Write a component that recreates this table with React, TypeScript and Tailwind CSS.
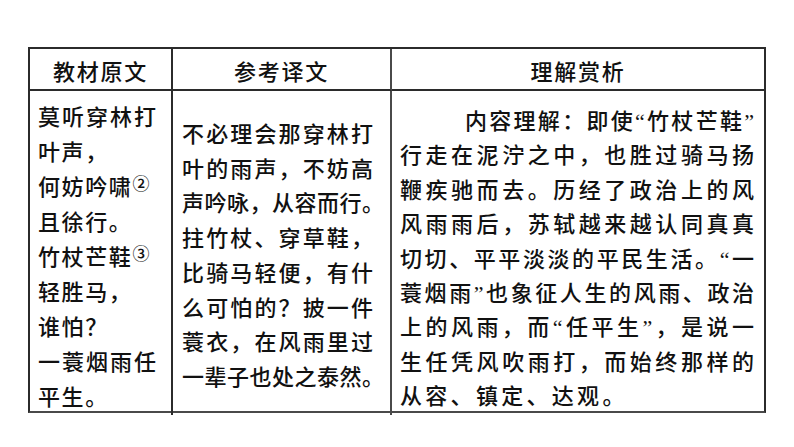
import React from 'react';

const font = { fontFamily: '"Liberation Serif", "Noto Sans CJK SC", sans-serif' };

// a line that is stretched edge to edge, like the justified print
const Full: React.FC<{ children: React.ReactNode; className?: string }> = ({ children, className = '' }) => (
  <div className={`whitespace-nowrap text-justify [text-align-last:justify] ${className}`}>{children}</div>
);

const Line: React.FC<{ children: React.ReactNode; className?: string }> = ({ children, className = '' }) => (
  <div className={`whitespace-nowrap ${className}`}>{children}</div>
);

const Note: React.FC<{ n: string }> = ({ n }) => (
  <span className="relative -top-[5px] text-[17px] leading-none">{n}</span>
);

const Dot = () => <span className="inline-block w-[11px]">。</span>;

const App: React.FC = () => {
  return (
    <div className="w-[794px] h-[447px] bg-white text-[#111] font-medium pt-[47px] pl-[28px]" style={font}>
      <div className="w-[738px] h-[366px] border-2 border-[#2b2b2b] border-b-[#4a4a4a] grid grid-cols-[143px_219px_1fr] grid-rows-[42px_1fr] text-[22px]">
        {/* header */}
        <div className="border-r-2 border-b-2 border-[#2b2b2b] flex items-center justify-center pt-[6px] tracking-[1.7px]">
          教材原文
        </div>
        <div className="border-r-2 border-b-2 border-[#2b2b2b] border-r-[#4a4a4a] flex items-center justify-center pt-[6px] tracking-[1.7px]">
          参考译文
        </div>
        <div className="border-b-2 border-[#2b2b2b] flex items-center justify-center pt-[6px] tracking-[1.7px]">
          理解赏析
        </div>

        {/* original text */}
        <div className="border-r-2 border-[#2b2b2b] pl-[8px] pr-[15px] pt-[9px] leading-[35px] tracking-[1.6px]">
          <Full className="tracking-normal">莫听穿林打</Full>
          <Line>叶声，</Line>
          <Line>何妨吟啸<Note n="②" /></Line>
          <Line>且徐行。</Line>
          <Line>竹杖芒鞋<Note n="③" /></Line>
          <Line>轻胜马，</Line>
          <Line>谁怕？</Line>
          <Full className="tracking-normal">一蓑烟雨任</Full>
          <Line>平生。</Line>
        </div>

        {/* translation */}
        <div className="border-r-2 border-[#4a4a4a] pl-[9px] pr-[17px] pt-[27px] leading-[34.7px]">
          <Full>不必理会那穿林打</Full>
          <Full>叶的雨声，不妨高</Full>
          <Full>声吟咏，从容而行<Dot /></Full>
          <Full>拄竹杖、穿草鞋，</Full>
          <Full>比骑马轻便，有什</Full>
          <Full>么可怕的？披一件</Full>
          <Full>蓑衣，在风雨里过</Full>
          <Full>一辈子也处之泰然<Dot /></Full>
        </div>

        {/* commentary */}
        <div className="pl-[8px] pr-[10px] pt-[14px] leading-[34.4px]">
          <Full className="pl-[65px]">内容理解：即使“竹杖芒鞋”</Full>
          <Full>行走在泥泞之中，也胜过骑马扬</Full>
          <Full>鞭疾驰而去。历经了政治上的风</Full>
          <Full>风雨雨后，苏轼越来越认同真真</Full>
          <Full>切切、平平淡淡的平民生活。“一</Full>
          <Full>蓑烟雨”也象征人生的风雨、政治</Full>
          <Full>上的风雨，而“任平生”，是说一</Full>
          <Full>生任凭风吹雨打，而始终那样的</Full>
          <Line className="tracking-[3.3px]">从容、镇定、达观。</Line>
        </div>
      </div>
    </div>
  );
};

export default App;
